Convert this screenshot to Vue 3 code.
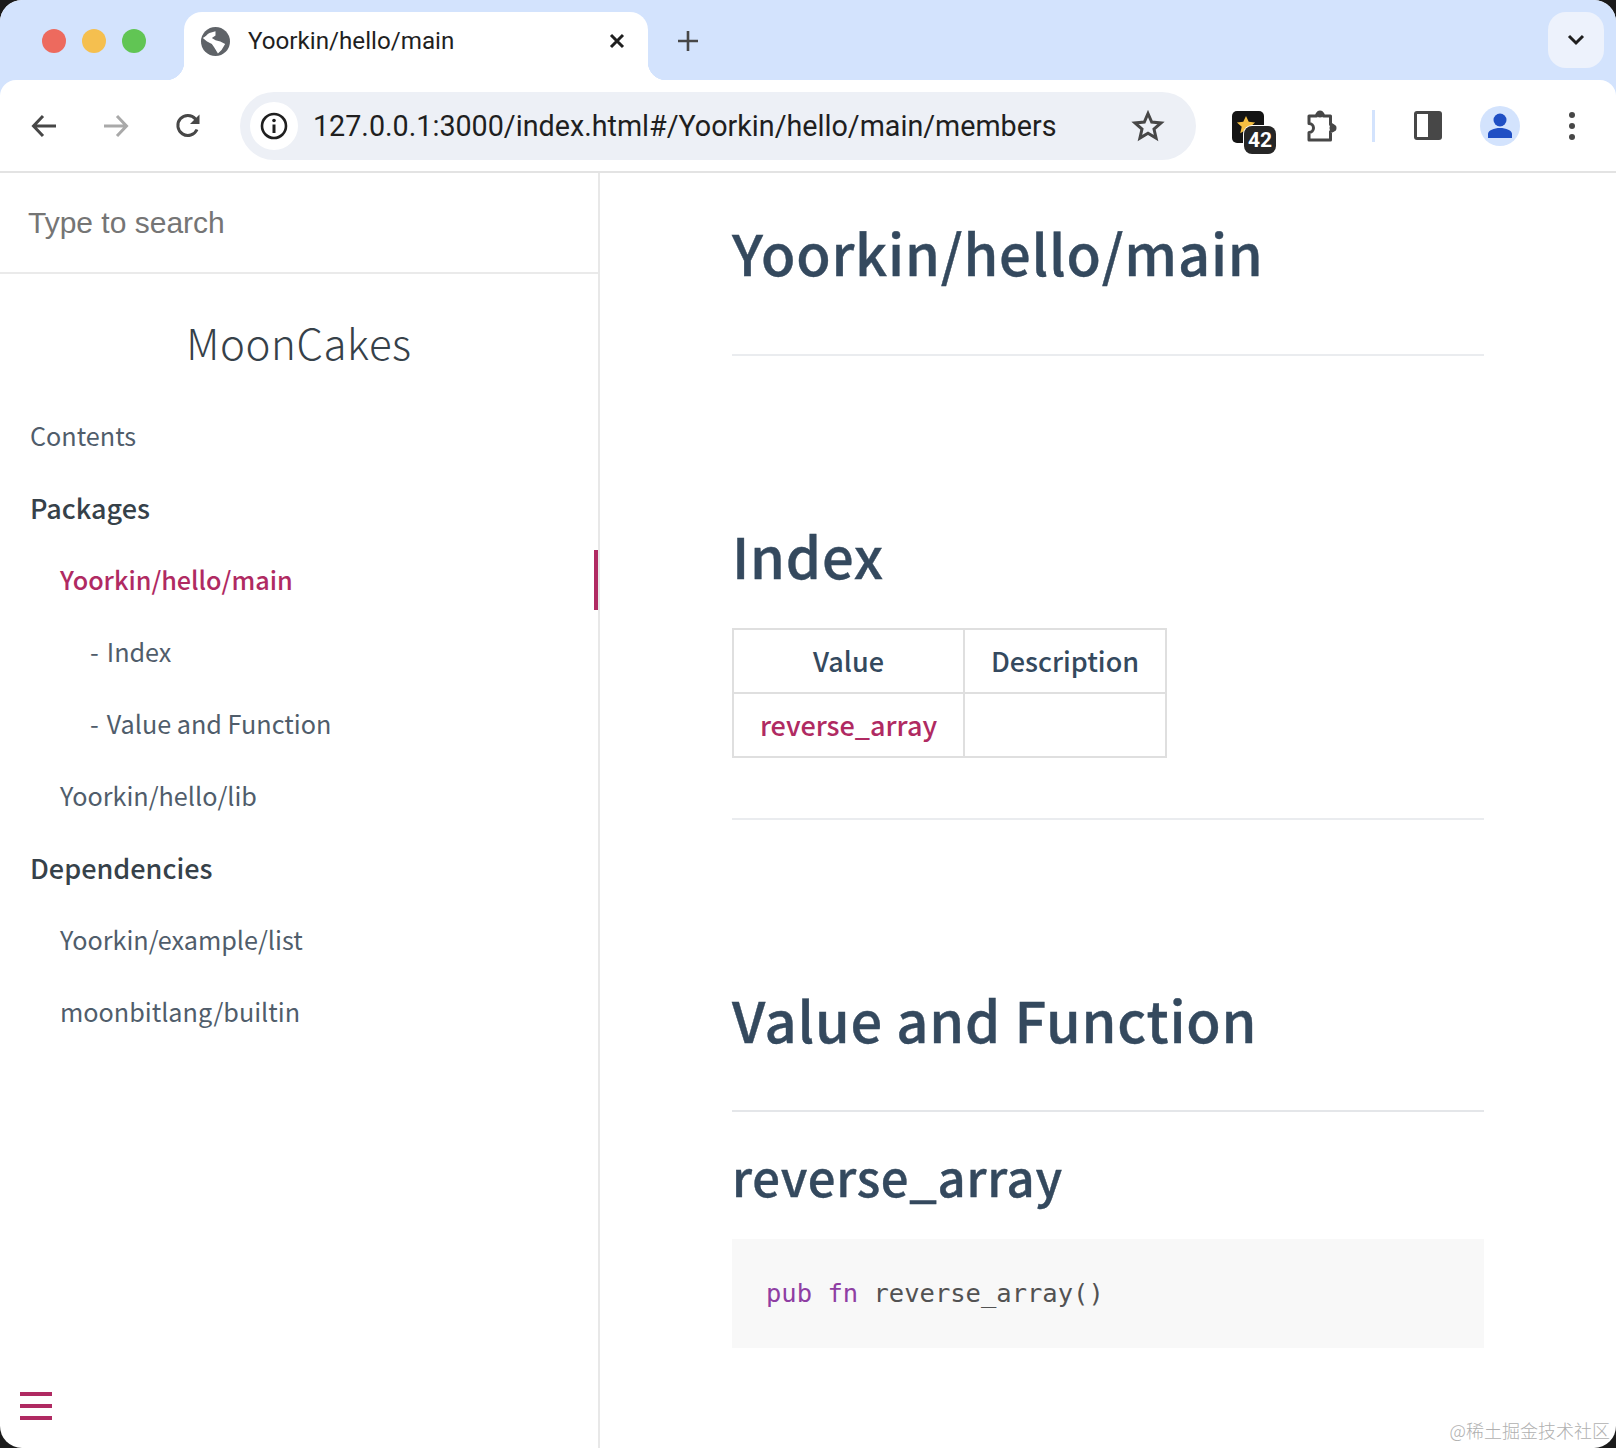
<script setup>
const nav = [
  { text: 'Contents', level: 0 },
  { text: 'Packages', level: 0, strong: true },
  { text: 'Yoorkin/hello/main', level: 1, active: true },
  { text: 'Index', level: 2 },
  { text: 'Value and Function', level: 2 },
  { text: 'Yoorkin/hello/lib', level: 1 },
  { text: 'Dependencies', level: 0, strong: true },
  { text: 'Yoorkin/example/list', level: 1 },
  { text: 'moonbitlang/builtin', level: 1 }
]
</script>

<template>
  <div class="screen">
    <div class="window">
      <header class="chrome">
        <div class="tabstrip">
          <div class="lights">
            <i class="light red"></i><i class="light yellow"></i><i class="light green"></i>
          </div>
          <div class="tab">
            <svg class="globe" width="29" height="29" viewBox="0 0 24 24">
              <circle cx="12" cy="12" r="12" fill="#5f6368" />
              <path d="M1.500 9C4 8 5 6 7 5l5-1.500V7L9 9l3 2 4 1 4 2-3 5-3 3-3-5-2-3-4-2z" fill="#fff" />
            </svg>
            <span class="tab-title">Yoorkin/hello/main</span>
            <svg class="close" width="18" height="18" viewBox="0 0 18 18">
              <path d="M3 3l12 12M15 3 3 15" stroke="#1f1f1f" stroke-width="3" fill="none" />
            </svg>
          </div>
          <svg class="plus" width="24" height="24" viewBox="0 0 24 24">
            <path d="M12 2v20M2 12h20" stroke="#474747" stroke-width="2.600" fill="none" />
          </svg>
          <div class="tab-search">
            <svg width="18" height="12" viewBox="0 0 18 12">
              <path d="M2 2l7 7 7-7" stroke="#1f1f1f" stroke-width="3" fill="none" />
            </svg>
          </div>
        </div>

        <div class="toolbar">
          <svg class="tool back" width="28" height="28" viewBox="0 0 28 28">
            <path d="M26 14H4M13 4 3.500 14l9.500 10" stroke="#474747" stroke-width="3" fill="none" />
          </svg>
          <svg class="tool forward" width="28" height="28" viewBox="0 0 28 28">
            <path d="M2 14h22M15 4l9.500 10L15 24" stroke="#a9a9a9" stroke-width="3" fill="none" />
          </svg>
          <svg class="tool reload" width="28" height="28" viewBox="0 0 28 28">
            <path d="M23 17.500A10 10 0 1 1 21.500 7L24 9.500" stroke="#474747" stroke-width="3" fill="none" />
            <path d="M25.500 2.500V12H16z" fill="#474747" />
          </svg>

          <div class="omnibox">
            <div class="info">
              <svg width="28" height="28" viewBox="0 0 28 28">
                <circle cx="14" cy="14" r="12" stroke="#1f1f1f" stroke-width="2.600" fill="none" />
                <path d="M14 12.500V21" stroke="#1f1f1f" stroke-width="3" />
                <circle cx="14" cy="8.500" r="1.800" fill="#1f1f1f" />
              </svg>
            </div>
            <span class="url">127.0.0.1:3000/index.html#/Yoorkin/hello/main/members</span>
            <svg class="star" width="34" height="34" viewBox="0 0 34 34">
              <path d="M17 4.500l3.700 8.600 9.300.8-7 6.100 2.100 9.100-8.100-4.800-8.100 4.800 2.100-9.100-7-6.100 9.300-.8z" stroke="#474747" stroke-width="3" fill="none" />
            </svg>
          </div>

          <div class="ext">
            <span class="ext-square">
              <svg width="20" height="20" viewBox="0 0 22 22">
                <path d="M11 1l3 6.500 7 .7-5.300 4.600L17.300 20 11 16.300 4.700 20l1.600-7.200L1 8.200l7-.7z" fill="#f5bf42" />
              </svg>
            </span>
            <span class="ext-badge">42</span>
          </div>
          <svg class="puzzle" width="36" height="34" viewBox="0 0 36 34">
            <path d="M5 7h7.500a3.500 3.500 0 0 1 7 0h7v8.500a3.500 3.500 0 0 1 0 7V31H5v-7.500a4.500 4.500 0 0 0 0-9z" stroke="#474747" stroke-width="3" stroke-linejoin="round" fill="none" />
            <circle cx="16" cy="5" r="3.500" fill="#474747" />
            <circle cx="29" cy="19" r="3.500" fill="#474747" />
          </svg>
          <i class="divider"></i>
          <div class="sidepanel"><i></i></div>
          <div class="avatar">
            <svg width="28" height="28" viewBox="0 0 28 28">
              <circle cx="14" cy="8" r="6.500" fill="#1f4fc4" />
              <path d="M2 26v-4c0-3.500 6-6 12-6s12 2.500 12 6v4z" fill="#1f4fc4" />
            </svg>
          </div>
          <div class="dots"><i></i><i></i><i></i></div>
        </div>
      </header>

      <div class="page">
        <aside class="sidebar">
          <div class="search">Type to search</div>
          <div class="brand">MoonCakes</div>
          <ul class="nav">
            <li
              v-for="item in nav"
              :key="item.text"
              :class="['nav-item', 'level-' + item.level, { strong: item.strong, active: item.active }]"
            >
              <span v-if="item.level === 2" class="dash">-</span>{{ item.text }}
            </li>
          </ul>
          <div class="menu"><i></i><i></i><i></i></div>
        </aside>

        <main class="content">
          <section class="block">
            <h1>Yoorkin/hello/main</h1>
          </section>
          <section class="block index">
            <h2>Index</h2>
            <table>
              <thead>
                <tr><th class="col1">Value</th><th class="col2">Description</th></tr>
              </thead>
              <tbody>
                <tr><td class="col1 link">reverse_array</td><td class="col2"></td></tr>
              </tbody>
            </table>
          </section>
          <section class="block values">
            <h1>Value and Function</h1>
            <h3>reverse_array</h3>
            <pre class="code"><span class="kw">pub</span> <span class="kw">fn</span> reverse_array()</pre>
          </section>
        </main>
      </div>
      <div class="mark">@稀土掘金技术社区</div>
    </div>
  </div>
</template>

<style>
html, body { margin: 0; background: #111; }
</style>

<style scoped>
* { box-sizing: border-box; }
.screen { width: 1616px; height: 1448px; background: #1b1b1b; overflow: hidden; }
.window {
  position: relative;
  width: 1616px;
  height: 1448px;
  background: #fff;
  border-radius: 22px;
  overflow: hidden;
  display: flex;
  flex-direction: column;
  font-family: "Noto Sans CJK SC", sans-serif;
}
.chrome { background: #d3e3fd; flex: none; }
.tabstrip { height: 80px; display: flex; align-items: flex-end; position: relative; }
.lights { width: 184px; height: 80px; padding: 29px 0 0 42px; display: flex; gap: 16px; flex: none; }
.light { width: 24px; height: 24px; border-radius: 50%; }
.red { background: #ed6a5e; }
.yellow { background: #f5bf4f; }
.green { background: #61c554; }
.tab {
  position: relative;
  width: 464px;
  height: 68px;
  background: #fff;
  border-radius: 18px 18px 0 0;
  display: flex;
  align-items: center;
  padding: 0 22px 10px 17px;
  flex: none;
}
.tab::before, .tab::after {
  content: "";
  position: absolute;
  bottom: 0;
  width: 18px;
  height: 18px;
}
.tab::before { left: -18px; background: radial-gradient(circle at 0 0, transparent 18px, #fff 18.500px); }
.tab::after { right: -18px; background: radial-gradient(circle at 100% 0, transparent 18px, #fff 18.500px); }
.globe { flex: none; }
.tab-title { margin-left: 18px; font: 400 24.200px/34px Roboto, sans-serif; color: #1f1f1f; flex: 1; }
.close { flex: none; margin-left: 6px; }
.plus { margin: 0 0 27px 28px; flex: none; }
.tab-search {
  position: absolute;
  right: 12px;
  top: 12px;
  width: 56px;
  height: 56px;
  border-radius: 18px;
  background: #edf2fc;
  display: flex;
  align-items: center;
  justify-content: center;
}
.toolbar {
  height: 93px;
  background: #fff;
  border-radius: 16px 16px 0 0;
  border-bottom: 2px solid #e3e3e3;
  display: flex;
  align-items: center;
  position: relative;
}
.tool { flex: none; }
.back { margin-left: 30px; }
.forward { margin-left: 44px; }
.reload { margin-left: 44px; }
.omnibox {
  width: 956px;
  height: 68px;
  margin-left: 38px;
  background: #edf0f6;
  border-radius: 34px;
  display: flex;
  align-items: center;
  padding: 0 31px 0 10px;
  flex: none;
}
.info {
  width: 48px;
  height: 48px;
  border-radius: 50%;
  background: #fff;
  display: flex;
  align-items: center;
  justify-content: center;
  flex: none;
}
.url { margin-left: 15px; font: 400 28.700px/40px Roboto, sans-serif; color: #1f1f1f; flex: 1; white-space: nowrap; }
.star { flex: none; }
.ext { position: relative; width: 44px; height: 44px; margin: 14px 0 0 36px; flex: none; }
.ext-square {
  position: absolute; left: 0; top: 0; width: 32px; height: 32px;
  background: #141414; border-radius: 5px;
  display: flex; align-items: flex-start; padding: 4px 0 0 4px;
}
.ext-badge {
  position: absolute; left: 12px; top: 15px; width: 32px; height: 28px;
  background: #262626; border-radius: 8px; box-shadow: 0 0 0 1px #fff;
  color: #fff; font: 700 21px/28px Roboto, sans-serif; text-align: center;
}
.puzzle { margin-left: 28px; flex: none; }
.divider { width: 3px; height: 32px; background: #d3e3fd; margin-left: 32px; flex: none; }
.sidepanel {
  width: 28px; height: 29px; margin-left: 39px; border-radius: 3px;
  background: #474747; padding: 3px 14px 3px 3px; flex: none;
}
.sidepanel i { display: block; width: 100%; height: 100%; background: #fff; }
.avatar {
  width: 40px; height: 40px; border-radius: 50%; background: #d3e3fd; margin-left: 38px;
  display: flex; align-items: center; justify-content: center; flex: none;
}
.dots { margin-left: 49px; display: flex; flex-direction: column; gap: 5px; flex: none; }
.dots i { width: 6px; height: 6px; border-radius: 50%; background: #474747; }

.page { flex: 1; display: flex; min-height: 0; }
.sidebar {
  position: relative;
  width: 600px;
  flex: none;
  border-right: 2px solid #e8e8e8;
}
.search {
  height: 101px;
  padding: 0 28px;
  display: flex;
  align-items: center;
  font: 400 30px/40px "Liberation Sans", sans-serif;
  color: #757575;
  border-bottom: 2px solid #eaeaea;
}
.brand {
  text-align: center;
  font: 300 42px/60px "Noto Sans CJK SC", "Open Sans", sans-serif;
  letter-spacing: 0.6px;
  color: #364149;
  margin-top: 38px;
}
.nav { list-style: none; margin: 27px 0 0; padding: 0; }
.nav-item {
  height: 72px;
  font-size: 25.200px;
  line-height: 72px;
  color: #505d6b;
  position: relative;
  white-space: nowrap;
}
.level-0 { padding-left: 30px; }
.level-1 { padding-left: 60px; }
.level-2 { padding-left: 90px; }
.dash { margin-right: 8px; }
.strong { font-size: 27px; font-weight: 500; color: #364149; padding-top: 1px; }
.active { font-weight: 500; color: #b02a62; }
.active::after {
  content: "";
  position: absolute;
  right: 0;
  top: 7px;
  width: 4px;
  height: 60px;
  background: #b02a62;
}
.menu {
  position: absolute;
  left: 20px;
  bottom: 28px;
  display: flex;
  flex-direction: column;
  gap: 8px;
}
.menu i { width: 32px; height: 4px; background: #b02a62; }

.content { flex: 1; padding: 0 132px; color: #34495e; min-width: 0; }
.block { border-bottom: 2px solid #eaecef; }
.block.values { border-bottom: 0; }
h1, h2 {
  margin: 0;
  font-size: 56px;
  font-weight: 500;
  letter-spacing: 0.8px;
  -webkit-text-stroke: 0.4px #34495e;
  line-height: 72px;
}
.block:first-child h1 { padding-top: 43px; height: 181px; }
.index { height: 464px; padding-top: 163px; }
table {
  border-collapse: collapse;
  margin-top: 37px;
  font-size: 27px;
  line-height: 62px;
}
th, td { border: 2px solid #dfdfdf; padding: 0; text-align: center; }
th { font-weight: 500; }
td.link { height: 64px; }
.col1 { width: 231px; }
.col2 { width: 202px; }
.link { color: #b02a62; font-weight: 500; }
.values { padding-top: 163px; }
.values h1 { height: 129px; border-bottom: 2px solid #e4e6e9; width: 752px; }
h3 {
  margin: 0;
  font-size: 49px;
  font-weight: 500;
  letter-spacing: 0.7px;
  -webkit-text-stroke: 0.4px #34495e;
  line-height: 64px;
  padding-top: 32px;
  height: 127px;
}
.code {
  margin: 0;
  background: #f8f8f8;
  height: 109px;
  padding: 0 34px;
  font: 400 25.500px/109px "DejaVu Sans Mono", monospace;
  color: #525252;
}
.kw { color: #8f3ea3; }
.mark {
  position: absolute;
  right: 6px;
  bottom: 6px;
  font: 300 18px/24px "Noto Sans CJK SC", sans-serif;
  color: #b0b0b0;
}
</style>
